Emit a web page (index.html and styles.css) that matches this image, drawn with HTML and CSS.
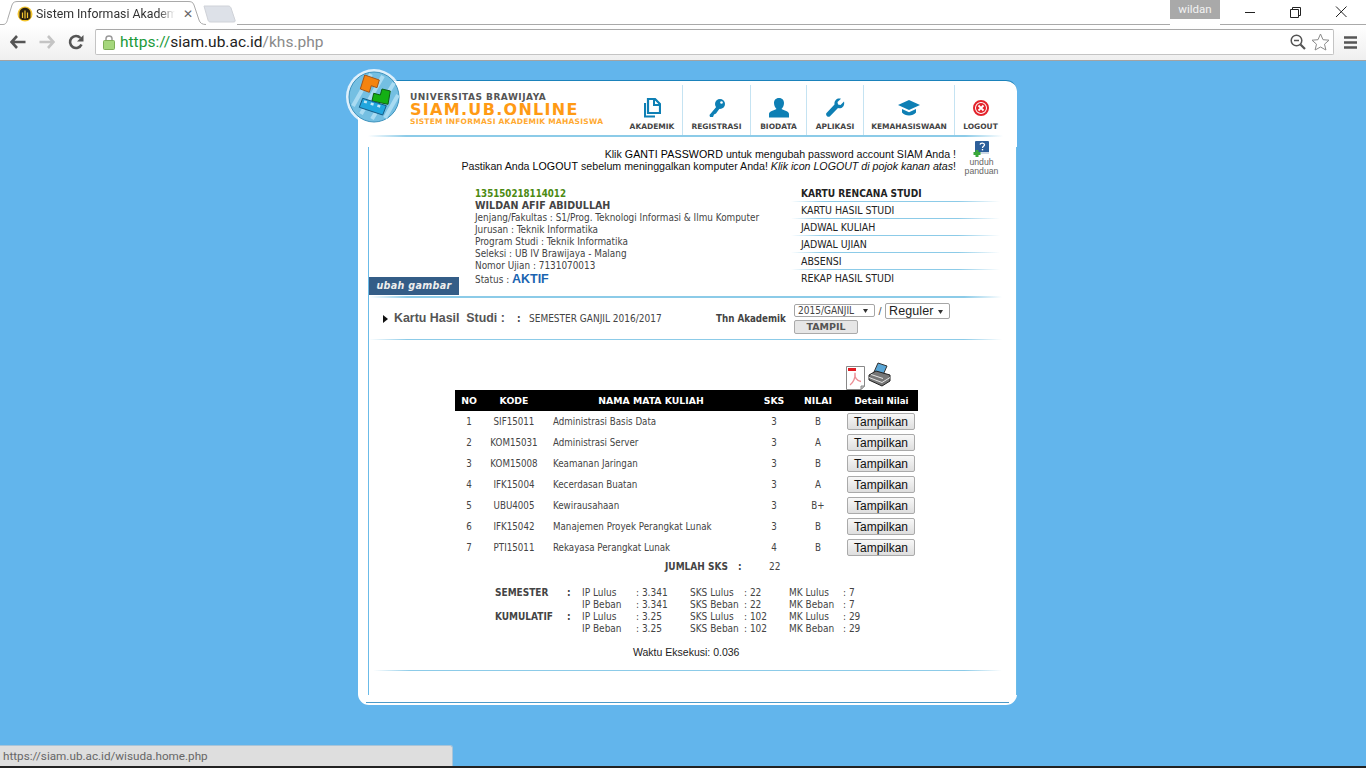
FILE: index.html
```html
<!DOCTYPE html>
<html lang="id">
<head>
<meta charset="utf-8">
<title>Sistem Informasi Akademik Mahasiswa</title>
<link rel="stylesheet" href="styles.css">
</head>
<body>
<div class="browser">
  <header class="tabstrip">
    <div class="tab">
      <svg class="tab-shape" width="206" height="25" viewBox="0 0 206 25"><path d="M0 24.5H3C6 24.5 7 22 8 18L12 5C13 2 15 1.5 18 1.5H188C191 1.5 193 2 194 5L199 20C200 23 202 24.5 206 24.5" fill="#fff" stroke="#a9a9a9"/></svg>
      <svg class="favicon" width="16" height="16" viewBox="0 0 16 16"><circle cx="8" cy="8" r="7.5" fill="#f3c530"/><path d="M2.500 12V7C2.500 4 5 1.800 8 1.800S13.500 4 13.500 7V12L11 14H5Z" fill="#2a2110"/><path d="M5.500 12V6.500M8 12.500V4.500M10.500 12V6.500" stroke="#f3c530" stroke-width="1.200"/></svg>
      <span class="tab-title">Sistem Informasi Akademi</span>
      <span class="tab-close">✕</span>
    </div>
    <svg class="newtab" width="34" height="18" viewBox="0 0 34 18"><path d="M1 1H25C27 1 27.500 2 28 3L32 15C32.500 16.500 32 17 30 17H8C6 17 5.500 16.500 5 15Z" fill="#dde1e8" stroke="#cfd2d8"/></svg>
    <div class="tabstrip-fill"></div>
    <div class="user">wildan</div>
    <div class="winctl">
      <svg width="46" height="24" viewBox="0 0 46 24"><path d="M18 12.500H28" stroke="#222"/></svg>
      <svg width="46" height="24" viewBox="0 0 46 24"><path d="M18.500 9.500H26.500V17.500H18.500ZM20.500 9.500V7.500H28.500V15.500H26.500" fill="none" stroke="#222"/></svg>
      <svg width="46" height="24" viewBox="0 0 46 24"><path d="M18 6.500L28.500 17M28.500 6.500L18 17" stroke="#222"/></svg>
    </div>
  </header>
  <nav class="toolbar">
    <svg class="tb-ico tb-back" width="16" height="14" viewBox="0 0 16 14"><path d="M7 1L1.500 7L7 13M2 7H15.500" fill="none" stroke="#555" stroke-width="2.600"/></svg>
    <svg class="tb-ico tb-fwd" width="16" height="14" viewBox="0 0 16 14"><path d="M9 1L14.500 7L9 13M14 7H.5" fill="none" stroke="#c4c4c4" stroke-width="2.600"/></svg>
    <svg class="tb-ico tb-rel" width="16" height="16" viewBox="0 0 16 16"><path d="M13.500 10.500A6 6 0 1 1 12.500 4" fill="none" stroke="#555" stroke-width="2.600"/><path d="M15.500 1V7.500H9Z" fill="#555"/></svg>
    <div class="omnibox">
      <svg class="lock" width="12" height="16" viewBox="0 0 12 16"><path d="M3 7V4.500C3 1 9 1 9 4.500V7" fill="none" stroke="#9a9a9a" stroke-width="1.500"/><rect x=".5" y="6.500" width="11" height="9" rx="1" fill="#a5d77c" stroke="#7fae58"/></svg>
      <span class="url"><span class="u-scheme">https://</span><span class="u-host">siam.ub.ac.id</span><span class="u-path">/khs.php</span></span>
      <svg class="zoomi" width="16" height="16" viewBox="0 0 16 16"><circle cx="6.500" cy="6.500" r="5.300" fill="none" stroke="#555" stroke-width="1.500"/><path d="M4 6.500H9" stroke="#555" stroke-width="1.500"/><path d="M10.500 10.500L15 15" stroke="#555" stroke-width="2.200"/></svg>
      <svg class="star" width="19" height="18" viewBox="0 0 19 18"><path d="M9.500 1L12 6.700L18 7.200L13.500 11.200L14.900 17L9.500 14L4.100 17L5.500 11.200L1 7.200L7 6.700Z" fill="#fff" stroke="#8a8a8a"/></svg>
    </div>
    <svg class="menu-ico" width="13" height="13" viewBox="0 0 13 13"><path d="M0 1.500H13M0 6.500H13M0 11.500H13" stroke="#555" stroke-width="2.600"/></svg>
  </nav>
  <main class="viewport">
    <div class="card">
      <svg class="logo" width="58" height="58" viewBox="0 0 58 58">
        <circle cx="29" cy="29" r="28" fill="#fff" opacity=".8"/>
        <circle cx="29" cy="29" r="25" fill="#74bfe2" stroke="#3d92bd"/>
        <path d="M8 38L26 6M16 46L38 8M27 51L49 15M40 50L53 27" stroke="#a9dbf2" stroke-width="4"/>
        <path d="M19.700 7L34.300 12L32 19.700L26.300 17.700L24.300 24.300L15.300 21Z" fill="#f5830f" stroke="#a3561a" stroke-linejoin="round"/>
        <path d="M37 21L45.300 23L43 36.300L27 33L28.700 25.300L35.300 27Z" fill="#14b014" stroke="#0c5f14" stroke-linejoin="round"/>
        <path d="M17.700 30.300L41.300 37.700L37.700 47L14.300 39.300Z" fill="#21a6de" stroke="#145a85" stroke-linejoin="round"/>
        <path d="M19 33.500L39 39.700" stroke="#bfe6f6" stroke-width="2.500" stroke-dasharray="3 4"/>
      </svg>
      <div class="card-head">
        <div class="brand">
          <div class="brand-uni">UNIVERSITAS BRAWIJAYA</div>
          <div class="brand-name">SIAM.UB.ONLINE</div>
          <div class="brand-sub">SISTEM INFORMASI AKADEMIK MAHASISWA</div>
        </div>
        <div class="mainnav">
          <a class="nav-item w-aka"><svg width="18" height="20" viewBox="0 0 18 20"><path d="M5 1H12L17 6V15H5Z" fill="none" stroke="#0e7fb4" stroke-width="2.200"/><path d="M11 1V7H17" fill="none" stroke="#0e7fb4" stroke-width="2"/><path d="M2 5V18.500H12" fill="none" stroke="#0e7fb4" stroke-width="2"/></svg><span>AKADEMIK</span></a>
          <a class="nav-item w-reg"><svg width="18" height="20" viewBox="0 0 18 20"><circle cx="12" cy="6" r="5" fill="#0e7fb4"/><path d="M9 8L1.500 17L2 19H5L6 16.500L8 15.500L12 10Z" fill="#0e7fb4"/><circle cx="13.500" cy="4.500" r="1.300" fill="#fff"/></svg><span>REGISTRASI</span></a>
          <a class="nav-item w-bio"><svg width="22" height="20" viewBox="0 0 22 20"><path d="M11 0C7.500 0 6 2.500 6 5C6 8 7.500 10 8.500 11C6 12.500 1 13 1 16V19.500H21V16C21 13 16 12.500 13.500 11C14.500 10 16 8 16 5C16 2.500 14.500 0 11 0Z" fill="#0e7fb4"/></svg><span>BIODATA</span></a>
          <a class="nav-item w-apl"><svg width="20" height="20" viewBox="0 0 20 20"><path d="M19 3.500L15.500 7L13 6.500L12.500 4L16 .8C12.500 -.5 9 2 9.500 6.500L1.500 15C0 17 3 20 5 18.300L13 10C17 11 20 8 19 3.500Z" fill="#0e7fb4"/></svg><span>APLIKASI</span></a>
          <a class="nav-item w-kem"><svg width="22" height="18" viewBox="0 0 22 18"><path d="M11 1L22 6L11 11L0 6Z" fill="#0e7fb4"/><path d="M4 10V13.500C7 17.500 15 17.500 18 13.500V10L11 13.300Z" fill="#0e7fb4"/></svg><span>KEMAHASISWAAN</span></a>
          <a class="nav-item w-log"><svg width="18" height="18" viewBox="0 0 18 18"><circle cx="9" cy="9" r="7" fill="#fff" stroke="#e3232b" stroke-width="2"/><circle cx="9" cy="9" r="5" fill="#e3232b"/><path d="M6.500 6.500L11.500 11.500M11.500 6.500L6.500 11.500" stroke="#fff" stroke-width="1.800"/></svg><span>LOGOUT</span></a>
        </div>
      </div>
      <div class="rule rule-head"></div>
      <div class="main">
        <div class="notice">
          <div class="notice-text">
            <p>Klik <b class="n-strong">GANTI PASSWORD</b> untuk mengubah password account SIAM Anda !</p>
            <p>Pastikan Anda <b class="n-strong">LOGOUT</b> sebelum meninggalkan komputer Anda! <i>Klik icon LOGOUT di pojok kanan atas</i>!</p>
          </div>
          <a class="help">
            <svg width="18" height="16" viewBox="0 0 18 16"><rect x="2" y="0" width="14" height="13" rx="1" fill="#2d5f9a"/><rect x="3" y="11" width="13" height="2" fill="#cfd8e4"/><path d="M7 3.500C7.500 1.500 11.500 1.700 11.500 3.800C11.500 5.300 9.500 5.300 9.500 7" fill="none" stroke="#fff" stroke-width="1.300"/><rect x="8.800" y="8" width="1.400" height="1.400" fill="#fff"/><path d="M2.500 9H5.500V11H7.500V14H5.500V16H2.500V14H.5V11H2.500Z" fill="#3aa83a"/></svg>
            <span>unduh<br>panduan</span>
          </a>
        </div>
        <div class="profile">
          <div class="photo"><a class="ubah">ubah gambar</a></div>
          <div class="info">
            <div class="nim">135150218114012</div>
            <div class="nama">WILDAN AFIF ABIDULLAH</div>
            <div>Jenjang/Fakultas : S1/Prog. Teknologi Informasi &amp; Ilmu Komputer</div>
            <div>Jurusan : Teknik Informatika</div>
            <div>Program Studi : Teknik Informatika</div>
            <div>Seleksi : UB IV Brawijaya - Malang</div>
            <div>Nomor Ujian : 7131070013</div>
            <div class="status">Status : <b>AKTIF</b></div>
          </div>
          <ul class="sidemenu">
            <li class="active">KARTU RENCANA STUDI</li>
            <li>KARTU HASIL STUDI</li>
            <li>JADWAL KULIAH</li>
            <li>JADWAL UJIAN</li>
            <li>ABSENSI</li>
            <li class="last">REKAP HASIL STUDI</li>
          </ul>
        </div>
        <div class="rule rule-a"></div>
        <div class="section">
          <span class="arrow"></span>
          <h1>Kartu Hasil&nbsp; Studi :</h1>
          <span class="sec-colon">:</span>
          <span class="sec-sem">SEMESTER GANJIL 2016/2017</span>
          <span class="sec-thn">Thn Akademik</span>
          <form class="sec-form">
            <div class="sec-selects">
              <select class="sel-thn"><option>2015/GANJIL</option></select>
              <span class="slash">/</span>
              <select class="sel-reg"><option>Reguler</option></select>
            </div>
            <button type="button" class="btn-tampil">TAMPIL</button>
          </form>
        </div>
        <div class="rule rule-b"></div>
        <div class="doc-icons">
          <svg class="ico-pdf" width="19" height="24" viewBox="0 0 19 24"><path d="M.5 .5H18.500V20L15 23.500H.5Z" fill="#fff" stroke="#888"/><path d="M15 23.500V20H18.500Z" fill="#ccc" stroke="#888"/><rect x="2" y="2" width="8" height="3" fill="#e01b22"/><path d="M4 19C7 17 10 11 9 7C8 11 11 15 15 15.500" fill="none" stroke="#eb8f96" stroke-width="1.400"/></svg>
          <svg class="ico-print" width="23" height="25" viewBox="0 0 23 25"><path d="M10 1L19 4L15 13L6 10Z" fill="#5aa6d6" stroke="#333"/><path d="M1 13L8 9L22 13V19L14 24L1 18Z" fill="#777" stroke="#222"/><path d="M1 15.500L14 20.500L22 15.500M3 12.500L15 16.500" fill="none" stroke="#e6e6e6"/></svg>
        </div>
        <table class="khs">
          <thead>
            <tr><th class="c-no">NO</th><th class="c-kode">KODE</th><th class="c-nama">NAMA MATA KULIAH</th><th class="c-sks">SKS</th><th class="c-nilai">NILAI</th><th class="c-det">Detail Nilai</th></tr>
          </thead>
          <tbody>
            <tr><td>1</td><td>SIF15011</td><td class="left">Administrasi Basis Data</td><td>3</td><td>B</td><td><button type="button">Tampilkan</button></td></tr>
            <tr><td>2</td><td>KOM15031</td><td class="left">Administrasi Server</td><td>3</td><td>A</td><td><button type="button">Tampilkan</button></td></tr>
            <tr><td>3</td><td>KOM15008</td><td class="left">Keamanan Jaringan</td><td>3</td><td>B</td><td><button type="button">Tampilkan</button></td></tr>
            <tr><td>4</td><td>IFK15004</td><td class="left">Kecerdasan Buatan</td><td>3</td><td>A</td><td><button type="button">Tampilkan</button></td></tr>
            <tr><td>5</td><td>UBU4005</td><td class="left">Kewirausahaan</td><td>3</td><td>B+</td><td><button type="button">Tampilkan</button></td></tr>
            <tr><td>6</td><td>IFK15042</td><td class="left">Manajemen Proyek Perangkat Lunak</td><td>3</td><td>B</td><td><button type="button">Tampilkan</button></td></tr>
            <tr><td>7</td><td>PTI15011</td><td class="left">Rekayasa Perangkat Lunak</td><td>4</td><td>B</td><td><button type="button">Tampilkan</button></td></tr>
          </tbody>
        </table>
        <div class="jumlah"><b>JUMLAH SKS</b><b class="j-colon">:</b><span class="j-val">22</span></div>
        <div class="summary">
          <b>SEMESTER</b><b>:</b><span>IP Lulus</span><span>: 3.341</span><span>SKS Lulus</span><span>: 22</span><span>MK Lulus</span><span>: 7</span>
          <b></b><b></b><span>IP Beban</span><span>: 3.341</span><span>SKS Beban</span><span>: 22</span><span>MK Beban</span><span>: 7</span>
          <b>KUMULATIF</b><b>:</b><span>IP Lulus</span><span>: 3.25</span><span>SKS Lulus</span><span>: 102</span><span>MK Lulus</span><span>: 29</span>
          <b></b><b></b><span>IP Beban</span><span>: 3.25</span><span>SKS Beban</span><span>: 102</span><span>MK Beban</span><span>: 29</span>
        </div>
        <div class="waktu">Waktu Eksekusi: 0.036</div>
        <div class="rule rule-c"></div>
      </div>
    </div>
    <div class="statusbubble">https://siam.ub.ac.id/wisuda.home.php</div>
  </main>
  <div class="taskbar"></div>
</div>
</body>
</html>
```
FILE: styles.css
```css
* { box-sizing: border-box; }
html, body { margin: 0; height: 100%; overflow: hidden; }
body { font-family: "DejaVu Sans Condensed", "DejaVu Sans", sans-serif; font-stretch: condensed; font-size: 10px; color: #444; }
p { margin: 0; }

.browser { display: flex; flex-direction: column; width: 1366px; height: 768px; }

/* tab strip */
.tabstrip { display: flex; height: 25px; background: #fff; flex: none; }
.tab { position: relative; width: 206px; height: 25px; display: flex; align-items: center; padding: 2px 0 0 17px; flex: none; }
.tab-shape { position: absolute; left: 0; top: 0; }
.favicon, .tab-title, .tab-close { position: relative; }
.tab-title { margin-left: 3px; width: 139px; white-space: nowrap; font: 12.300px Roboto, sans-serif; color: #333; -webkit-mask-image: linear-gradient(to right, #000 88%, transparent); mask-image: linear-gradient(to right, #000 88%, transparent); }
.tab-close { margin-left: 8px; font: bold 12px "DejaVu Sans", sans-serif; color: #666; }
.newtab { margin: 5px 0 0 -3px; flex: none; }
.tabstrip-fill { flex: 1; border-bottom: 1px solid #a9a9a9; margin-top: 24px; }
.user { width: 50px; height: 19px; background: #a9a9a9; color: #f2f2f2; font: 11.500px/19px Roboto, sans-serif; text-align: center; flex: none; }
.winctl { display: flex; padding-left: 7px; width: 146px; border-bottom: 1px solid #a9a9a9; height: 25px; flex: none; }
.winctl svg:nth-child(2) { margin-left: -1px; }

/* toolbar */
.toolbar { display: flex; align-items: center; height: 36px; flex: none; background: linear-gradient(#fff, #efefef); border-bottom: 1px solid #a3a3a3; padding-bottom: 1px; }
.tb-back { margin-left: 10px; }
.tb-fwd { margin-left: 13px; }
.tb-rel { margin-left: 13px; }
.omnibox { display: flex; align-items: center; margin-left: 11px; width: 1239px; height: 26px; background: #fff; border: 1px solid #c4c4c4; border-top-color: #a8a8a8; border-radius: 2px; }
.lock { margin-left: 7px; }
.url { margin-left: 5px; flex: 1; font: 15.500px Roboto, sans-serif; white-space: nowrap; }
.u-scheme { color: #1a9a3a; }
.u-host { color: #222; }
.u-path { color: #8a8a8a; }
.zoomi { margin-right: 5px; }
.star { margin-right: 3px; }
.menu-ico { margin-left: 10px; }

/* page */
.viewport { position: relative; flex: 1; background: #62b5ec; padding: 19px 0 0 358px; }
.taskbar { height: 2px; background: #222; flex: none; }
.statusbubble { position: absolute; left: 0; bottom: 0; width: 453px; height: 21px; background: #dedede; border: 1px solid #a9c4d8; border-width: 1px 1px 0 0; border-top-right-radius: 3px; color: #666; font: 11.700px/21px Roboto, sans-serif; padding-left: 3px; }

.card { position: relative; width: 659px; height: 625px; background: #fff; border-top: 1px solid #1b82bb; border-radius: 11px; }
.card::after { content: ""; position: absolute; left: 8px; right: 8px; bottom: 2px; height: 1px; background: #4d9ac8; }
.logo { position: absolute; left: -13px; top: -13px; }

.card-head { display: flex; height: 54px; }
.brand { margin: 11px 0 0 52px; width: 212px; flex: none; white-space: nowrap; font-stretch: normal; font-family: "DejaVu Sans", sans-serif; }
.brand-uni { font-size: 9px; font-weight: bold; line-height: 11px; color: #555; letter-spacing: .5px; }
.brand-name { font-size: 16px; font-weight: bold; line-height: 14px; color: #ff9a14; letter-spacing: 1.300px; }
.brand-sub { font-size: 7.500px; font-weight: bold; line-height: 9px; color: #ffa930; letter-spacing: .25px; }
.mainnav { display: flex; }
.nav-item { display: flex; flex-direction: column; align-items: center; justify-content: space-between; height: 50px; margin-top: 4px; padding-top: 13px; border-right: 1px solid #c5e3f2; font-family: "DejaVu Sans", sans-serif; font-stretch: normal; font-size: 7.500px; font-weight: bold; line-height: 10px; color: #444; white-space: nowrap; }
.nav-item svg { height: 20px; flex: none; }
.nav-item span { margin-bottom: 3px; }
.w-aka { width: 61px; }
.w-reg { width: 68px; }
.w-bio { width: 56px; }
.w-apl { width: 57px; }
.w-kem { width: 91px; }
.w-log { width: 51px; border-right: 0; }

.rule { height: 2px; background: linear-gradient(to right, #ffffff00, #8ccbe8 6%, #8ccbe8 94%, #ffffff00); }
.rule-head { margin: 0 14px 0 10px; }

.main { margin: 10px 0 0 10px; width: 649px; height: 548px; border-left: 1px solid #6bbbe8; border-right: 1px solid #6bbbe8; }
.notice { display: flex; height: 39px; padding-top: 1px; }
.notice-text { width: 587px; text-align: right; font: 10.650px/12px "Liberation Sans", Arial, sans-serif; color: #111; flex: none; }
.n-strong { font-weight: normal; color: #000; letter-spacing: .1px; }
.help { display: flex; flex-direction: column; align-items: center; width: 33px; margin: -7px 0 0 9px; font: 8.700px/9px "Liberation Sans", Arial, sans-serif; color: #666; text-align: center; flex: none; }
.help span { margin-top: 1px; }

.profile { display: flex; height: 110px; }
.photo { width: 106px; flex: none; position: relative; }
.ubah { position: absolute; left: 0; top: 91px; width: 90px; height: 18px; background: #345d87; color: #eee; font-family: "DejaVu Sans", sans-serif; font-stretch: normal; font-style: italic; font-weight: bold; font-size: 9.600px; line-height: 18px; text-align: center; letter-spacing: .3px; }
.info { width: 316px; padding-top: 2px; line-height: 12px; font-size: 9.900px; flex: none; white-space: nowrap; }
.nim { color: #4c8a12; font-weight: bold; font-size: 9.700px; }
.nama { font-weight: bold; color: #444; font-size: 10.600px; line-height: 11px; margin-bottom: 1px; }
.status { line-height: 14px; }
.status b { font: bold 12.500px/14px "Liberation Sans", Arial, sans-serif; color: #1a64b0; }
.sidemenu { list-style: none; margin: -1px 0 0; padding: 0; width: 209px; font-size: 10.500px; color: #222; }
.sidemenu li { height: 17px; line-height: 16px; padding-left: 10px; white-space: nowrap; background: linear-gradient(to right, #ffffff00, #8ccbe8 15%, #8ccbe8 80%, #ffffff00) left bottom / 100% 1px no-repeat; }
.sidemenu .active { font-weight: bold; font-size: 10.100px; line-height: 18px; }
.sidemenu .last { background: none; }

.rule-a { margin-right: 14px; }
.section { display: flex; align-items: center; height: 41px; color: #444; }
.arrow { width: 0; height: 0; border: 4px solid transparent; border-left: 5px solid #111; border-right: 0; margin-left: 14px; flex: none; }
.section h1 { margin: 0 0 2px 6px; font: bold 12.400px "Liberation Sans", Arial, sans-serif; color: #555; width: 123px; flex: none; }
.sec-colon { font-weight: bold; width: 12px; flex: none; }
.sec-sem { width: 187px; flex: none; }
.sec-thn { font-weight: bold; width: 78px; color: #444; font-size: 9.700px; flex: none; }
.sec-form { display: flex; flex-direction: column; align-items: flex-start; gap: 2px; }
.sec-selects { display: flex; align-items: center; height: 15px; }
.sec-selects select { appearance: none; border: 1px solid #a6a6a6; background: #fff url("data:image/svg+xml,%3Csvg xmlns='http://www.w3.org/2000/svg' width='5' height='4'%3E%3Cpath d='M0 0H5L2.500 4Z' fill='%23333'/%3E%3C/svg%3E") no-repeat; border-radius: 2px; padding: 0 0 0 3px; margin: 0; }
.sel-thn { width: 81px; height: 13px; font: 10px/11px "DejaVu Sans Condensed", "DejaVu Sans", sans-serif; font-stretch: condensed; color: #444; background-position: 68px 4px !important; }
.sel-reg { width: 65px; height: 16px; font: 12.500px/14px "Liberation Sans", Arial, sans-serif; letter-spacing: .1px; color: #222; background-position: 52px 6px !important; }
.slash { width: 10px; text-align: center; color: #555; font: 11px "Liberation Sans", Arial, sans-serif; }
.btn-tampil { width: 64px; height: 14px; padding: 0; border: 1px solid #aaa; border-radius: 2px; background: #e6e6e6; font-family: "DejaVu Sans", sans-serif; font-size: 9.500px; font-weight: bold; line-height: 12px; color: #555; }

.rule-b { height: 1px; margin-right: 14px; }
.doc-icons { display: flex; height: 50px; align-items: flex-end; padding-left: 477px; gap: 3px; }
.ico-print { margin-bottom: 3px; }

.khs { margin-left: 86px; border-collapse: collapse; table-layout: fixed; width: 463px; font-size: 9.700px; }
.khs th { background: #000; color: #fff; height: 21px; padding: 0; font-family: "DejaVu Sans", sans-serif; font-stretch: normal; font-size: 9.300px; font-weight: bold; }
.khs .c-det { font-size: 8.700px; }
.khs td { height: 21px; padding: 0; text-align: center; color: #444; }
.khs td.left { text-align: left; padding-left: 8px; white-space: nowrap; }
.c-no { width: 28px; }
.c-kode { width: 62px; }
.c-nama { width: 212px; }
.c-sks { width: 34px; }
.c-nilai { width: 54px; }
.c-det { width: 73px; }
.khs button { display: block; margin: 0 0 0 2px; width: 68px; height: 17px; padding: 1px 0 0; border: 1px solid #aaa; border-radius: 2px; background: linear-gradient(#f8f8f8, #dedede); font: 12px/14px "Liberation Sans", Arial, sans-serif; color: #111; }

.jumlah { display: flex; margin: 3px 0 0 296px; height: 12px; line-height: 12px; font-size: 10px; }
.jumlah b { width: 73px; white-space: nowrap; }
.jumlah .j-colon { width: 31px; }

.summary { display: grid; grid-template-columns: 72px 15px 54px 54px 54px 45px 54px auto; grid-auto-rows: 12px; margin: 14px 0 0 126px; line-height: 12px; font-size: 10px; white-space: nowrap; }
.waktu { margin: 11px 0 0 264px; font: 10.500px/12px "Liberation Sans", Arial, sans-serif; color: #222; }
.rule-c { margin: 12px 14px 0 4px; height: 1px; }
```
